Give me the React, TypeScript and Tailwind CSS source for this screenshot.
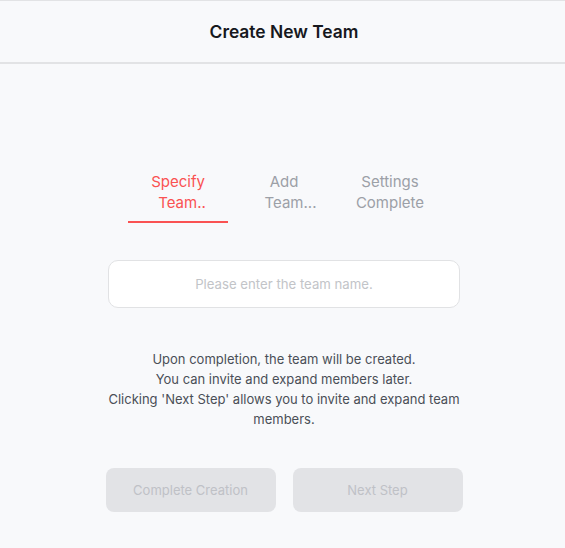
const TABS = [
  { first: "Specify", second: "Team..", shift: "pl-[8px]", active: true },
  { first: "Add", second: "Team...", shift: "pl-[13px]", active: false },
  { first: "Settings", second: "Complete", shift: "", active: false },
];

export default function App() {
  return (
    <div className="min-h-screen bg-[#f8f9fb] font-['Inter',sans-serif]">
      <header className="flex h-[64px] items-center justify-center border-t border-b-2 border-[#e2e3e5] pl-[3px] pt-[2px]">
        <h1 className="text-[17.4px] font-semibold text-[#16181d]">Create New Team</h1>
      </header>

      <main className="flex flex-col items-center pl-[3px] pt-[107px]">
        <div className="flex gap-[6px]">
          {TABS.map((t) => (
            <div
              key={t.first}
              className={
                "flex w-[100px] flex-col items-center border-b-2 pb-[8px] text-[15px] leading-[21px] " +
                (t.active ? "border-[#fa5252] text-[#fa5252]" : "border-transparent text-[#9ca0a7]")
              }
            >
              <span>{t.first}</span>
              <span className={t.shift}>{t.second}</span>
            </div>
          ))}
        </div>

        <input
          placeholder="Please enter the team name."
          className="mt-[37px] h-[48px] w-[352px] rounded-[10px] border border-[#e1e2e4] bg-white text-center text-[13.2px] text-[#333] outline-none placeholder:text-[#c2c4c8]"
        />

        <p className="mt-[41px] w-[360px] text-center text-[13px] leading-[20px] text-[#4a4f57]">
          Upon completion, the team will be created.
          <br />
          You can invite and expand members later.
          <br />
          Clicking 'Next Step' allows you to invite and expand team members.
        </p>

        <div className="mt-[39px] flex gap-[17px]">
          <button className="h-[44px] w-[170px] rounded-[8px] bg-[#e2e3e6] pt-[1px] text-[13px] text-[#bfc1c6]">
            Complete Creation
          </button>
          <button className="h-[44px] w-[170px] rounded-[8px] bg-[#e2e3e6] pt-[1px] text-[13px] text-[#bfc1c6]">
            Next Step
          </button>
        </div>
      </main>
    </div>
  );
}
